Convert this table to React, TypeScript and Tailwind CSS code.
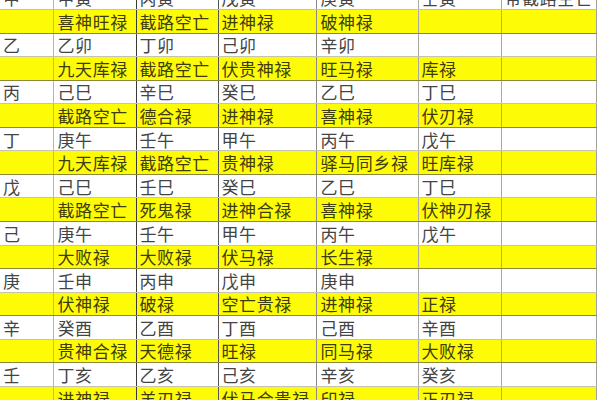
import React from "react";

type Row = { yellow: boolean; cells: string[] };

const rows: Row[] = [
  { yellow: false, cells: ["甲", "甲寅", "丙寅", "戊寅", "庚寅", "壬寅", "带截路空亡"] },
  { yellow: true, cells: ["", "喜神旺禄", "截路空亡", "进神禄", "破神禄", "", ""] },
  { yellow: false, cells: ["乙", "乙卯", "丁卯", "己卯", "辛卯", "", ""] },
  { yellow: true, cells: ["", "九天库禄", "截路空亡", "伏贵神禄", "旺马禄", "库禄", ""] },
  { yellow: false, cells: ["丙", "己巳", "辛巳", "癸巳", "乙巳", "丁巳", ""] },
  { yellow: true, cells: ["", "截路空亡", "德合禄", "进神禄", "喜神禄", "伏刃禄", ""] },
  { yellow: false, cells: ["丁", "庚午", "壬午", "甲午", "丙午", "戊午", ""] },
  { yellow: true, cells: ["", "九天库禄", "截路空亡", "贵神禄", "驿马同乡禄", "旺库禄", ""] },
  { yellow: false, cells: ["戊", "己巳", "壬巳", "癸巳", "乙巳", "丁巳", ""] },
  { yellow: true, cells: ["", "截路空亡", "死鬼禄", "进神合禄", "喜神禄", "伏神刃禄", ""] },
  { yellow: false, cells: ["己", "庚午", "壬午", "甲午", "丙午", "戊午", ""] },
  { yellow: true, cells: ["", "大败禄", "大败禄", "伏马禄", "长生禄", "", ""] },
  { yellow: false, cells: ["庚", "壬申", "丙申", "戊申", "庚申", "", ""] },
  { yellow: true, cells: ["", "伏神禄", "破禄", "空亡贵禄", "进神禄", "正禄", ""] },
  { yellow: false, cells: ["辛", "癸酉", "乙酉", "丁酉", "己酉", "辛酉", ""] },
  { yellow: true, cells: ["", "贵神合禄", "天德禄", "旺禄", "同马禄", "大败禄", ""] },
  { yellow: false, cells: ["壬", "丁亥", "乙亥", "己亥", "辛亥", "癸亥", ""] },
  { yellow: true, cells: ["", "进神禄", "羊刃禄", "伏马合贵禄", "印禄", "正刃禄", ""] },
];

// line after each column: dark for the two columns in the middle
const rightLine = [
  "border-r-[#b4b4b4]",
  "border-r-[#3a3a3a]",
  "border-r-[#555555]",
  "border-r-[#8a8a8a]",
  "border-r-[#a8a8a8]",
  "border-r-[#a8a8a8]",
  "border-r-[#a0a0a0]",
];

const padLeft = ["pl-[3px]", "pl-[4px]", "pl-[3px]", "pl-[3px]", "pl-[4px]", "pl-[3px]", "pl-[3px]"];

export default function App() {
  return (
    <div className="w-[600px] h-[400px] overflow-hidden bg-white font-['Noto_Sans_CJK_SC',sans-serif]">
      <table className="-mt-[14px] w-[596px] table-fixed border-collapse text-[17px] leading-none tracking-[0.6px]">
        <colgroup>
          <col className="w-[53px]" />
          <col className="w-[83px]" />
          <col className="w-[82px]" />
          <col className="w-[98px]" />
          <col className="w-[102px]" />
          <col className="w-[83px]" />
          <col className="w-[95px]" />
        </colgroup>
        <tbody>
          {rows.map((row, i) => (
            <tr
              key={i}
              className={
                row.yellow
                  ? "h-[23.56px] bg-[#fdfb06] text-[#3f3c0c]"
                  : "h-[23.56px] bg-white text-[#444444]"
              }
            >
              {row.cells.map((c, j) => (
                <td
                  key={j}
                  className={`border-r border-b whitespace-nowrap overflow-hidden p-0 align-middle ${padLeft[j]} ${rightLine[j]} ${
                    row.yellow ? "border-b-[#8c8a3a]" : "border-b-[#c4c4b0]"
                  }`}
                >
                  {c}
                </td>
              ))}
            </tr>
          ))}
        </tbody>
      </table>
    </div>
  );
}
